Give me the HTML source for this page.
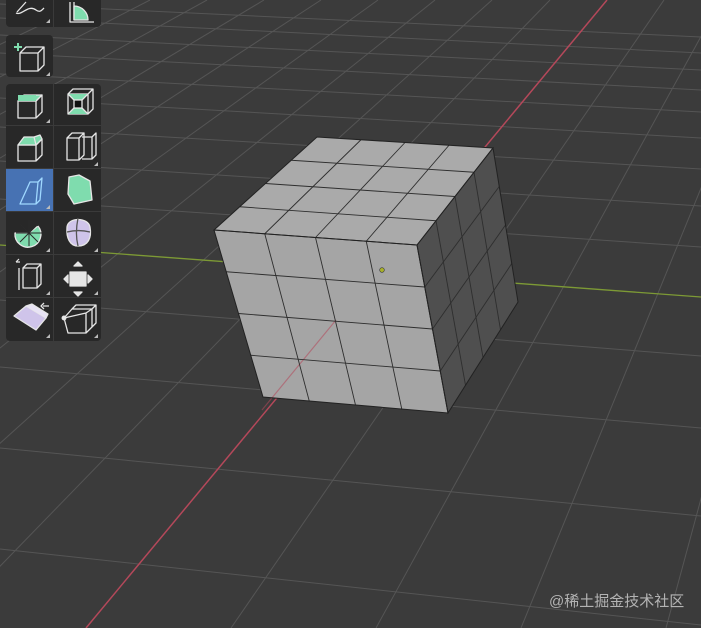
<!DOCTYPE html>
<html><head><meta charset="utf-8"><style>
html,body{margin:0;padding:0;width:701px;height:628px;overflow:hidden;background:#3b3b3b}
svg{position:absolute;left:0;top:0}
.wm{position:absolute;left:549px;top:590px;font:15px "Liberation Sans","Noto Sans CJK SC",sans-serif;color:#c9c9c9;opacity:.85}
</style></head><body>
<svg width="701" height="628" viewBox="0 0 701 628">
<g stroke="#555" stroke-width="1" fill="none">
<line x1="664" y1="0" x2="231" y2="628"/><line x1="721" y1="0" x2="376" y2="628"/>
<line x1="778" y1="0" x2="521" y2="628"/><line x1="836" y1="0" x2="666" y2="628"/>
<line x1="893" y1="0" x2="811" y2="628"/><line x1="550" y1="0" x2="-60" y2="628"/>
<line x1="492" y1="0" x2="-205" y2="628"/><line x1="435" y1="0" x2="-350" y2="628"/>
<line x1="378" y1="0" x2="-495" y2="628"/><line x1="321" y1="0" x2="-640" y2="628"/>
<line x1="264" y1="0" x2="-785" y2="628"/><line x1="207" y1="0" x2="-930" y2="628"/>
<line x1="150" y1="0" x2="-1075" y2="628"/><line x1="93" y1="0" x2="-1220" y2="628"/>
<line x1="0" y1="549" x2="701" y2="625"/><line x1="0" y1="448" x2="701" y2="516"/>
<line x1="0" y1="367" x2="701" y2="428"/><line x1="0" y1="300" x2="701" y2="356"/>
<line x1="0" y1="199" x2="701" y2="247"/><line x1="0" y1="161" x2="701" y2="206"/>
<line x1="0" y1="127" x2="701" y2="169"/><line x1="0" y1="98" x2="701" y2="138"/>
<line x1="0" y1="74" x2="701" y2="112"/><line x1="0" y1="53" x2="701" y2="90"/>
<line x1="0" y1="35" x2="701" y2="70"/><line x1="0" y1="18" x2="701" y2="53"/>
<line x1="0" y1="4" x2="701" y2="37"/>
</g>
<line x1="0" y1="245" x2="701" y2="297" stroke="#7d9a35" stroke-width="1.3"/>
<line x1="607" y1="0" x2="86" y2="628" stroke="#b4485a" stroke-width="1.5"/>
<!-- cube -->
<polygon points="214,230 417,245 493,148 317,137" fill="#aaaaaa"/>
<polygon points="214,230 417,245 448,413 263,397" fill="#a5a5a5"/>
<polygon points="417,245 493,148 518,302 448,413" fill="#4f4f4f"/>
<line x1="336" y1="320" x2="262" y2="410" stroke="#b4485a" stroke-width="1.2" opacity=".55"/>
<g stroke="#2e2e2e" stroke-width="0.9">
<line x1="264.75" y1="233.75" x2="309.25" y2="401"/><line x1="315.5" y1="237.5" x2="355.5" y2="405"/><line x1="366.25" y1="241.25" x2="401.75" y2="409"/>
<line x1="226.25" y1="271.75" x2="424.75" y2="287"/><line x1="238.5" y1="313.5" x2="432.5" y2="329"/><line x1="250.75" y1="355.25" x2="440.25" y2="371"/>
<line x1="239.75" y1="206.75" x2="436" y2="220.75"/><line x1="265.5" y1="183.5" x2="455" y2="196.5"/><line x1="291.25" y1="160.25" x2="474" y2="172.25"/>
<line x1="264.75" y1="233.75" x2="361" y2="139.75"/><line x1="315.5" y1="237.5" x2="405" y2="142.5"/><line x1="366.25" y1="241.25" x2="449" y2="145.25"/>
<line x1="436" y1="220.75" x2="465.5" y2="385.25"/><line x1="455" y1="196.5" x2="483" y2="357.5"/><line x1="474" y1="172.25" x2="500.5" y2="329.75"/>
<line x1="424.75" y1="287" x2="499.25" y2="186.5"/><line x1="432.5" y1="329" x2="505.5" y2="225"/><line x1="440.25" y1="371" x2="511.75" y2="263.5"/>
</g>
<g stroke="#222" stroke-width="1" fill="none">
<polygon points="214,230 417,245 493,148 317,137"/><polygon points="214,230 417,245 448,413 263,397"/><polygon points="417,245 493,148 518,302 448,413"/>
</g>
<circle cx="382" cy="270" r="2.3" fill="#a8b02a" stroke="#333" stroke-width=".6"/>
<!-- toolbar -->
<g fill="#282828">
<rect x="6" y="-8" width="95" height="35" rx="4"/>
<rect x="6" y="35" width="47" height="42" rx="4"/>
<rect x="6" y="84" width="95" height="257" rx="4"/>
</g>
<rect x="6" y="168" width="47" height="43" fill="#4772b3"/>
<g stroke="#3a3a3a" stroke-width="1"><line x1="53.5" y1="-8" x2="53.5" y2="27"/><line x1="53.5" y1="84" x2="53.5" y2="341"/>
<line x1="6" y1="125.5" x2="101" y2="125.5"/><line x1="6" y1="168.5" x2="101" y2="168.5"/><line x1="6" y1="211.5" x2="101" y2="211.5"/><line x1="6" y1="254.5" x2="101" y2="254.5"/><line x1="6" y1="297.5" x2="101" y2="297.5"/></g>
<g fill="#bbb">
<polygon points="50,19 50,23 46,23"/><polygon points="50,72 50,76 46,76"/>
<polygon points="50,119 50,123 46,123"/><polygon points="98,162 98,166 94,166"/><polygon points="50,205 50,209 46,209"/>
<polygon points="50,248 50,252 46,252"/><polygon points="98,248 98,252 94,252"/><polygon points="50,291 50,295 46,295"/><polygon points="98,291 98,295 94,295"/>
<polygon points="50,334 50,338 46,338"/><polygon points="98,334 98,338 94,338"/>
</g>
<g stroke="#e6e6e6" stroke-width="1.3" fill="none" stroke-linejoin="round">
<path d="M17,12 L26,2 M16,13 C22,16 28,4 36,10 C40,13 42,10 44,8"/>
<path d="M70,2 V22 H94 M74,2 V20" /><path d="M74,20 L74,6 A14,14 0 0 1 88,20 Z" fill="#7fdcae"/>
<path d="M14,47 H22 M18,43 V51" stroke="#7fdcae" stroke-width="2"/>
<path d="M20,53 H38 V71 H20 Z M20,53 L26,47 H44 V65 L38,71 M38,53 L44,47"/>
<path d="M18,101 H36 V118 H18 Z M36,101 L42,95 V112 L36,118" /><path d="M18,101 L24,95 H42 L36,101 Z M18,95 v0" fill="#7fdcae"/><rect x="18" y="95" width="18" height="6" fill="#7fdcae" stroke="none"/>
<path d="M68,94 H88 V114 H68 Z M68,94 L73,89 H93 V109 L88,114 M88,94 L93,89" /><path d="M68,94 L74,100 H82 L88,94 M68,114 L74,108 H82 L88,114" fill="#7fdcae"/><rect x="74" y="100" width="8" height="8" fill="#111"/>
<path d="M18,145 H36 V161 H18 Z M36,145 L42,139 V155 L36,161"/><path d="M18,145 L24,137 H34 L36,145 Z M34,137 L40,135 L42,139 L36,145" fill="#7fdcae"/>
<path d="M67,138 H79 V160 H67 Z M79,138 L84,133 V155 L79,160 M67,138 L72,133 H84 M82,137 H92 V159 H82 M92,137 L96,133 V155 L92,159"/>
<path d="M20,204 L30,182 H38 L36,204 Z M38,182 L42,178 L40,200 L36,204" stroke="#9fd8ff"/>
<path d="M69,177 L79,175 L90,181 L92,200 L74,204 L68,194 Z" fill="#7fdcae"/>
<path d="M15,233 A13,13 0 1 0 38,226 L29,233 Z" fill="#7fdcae"/><path d="M29,221 A12,12 0 0 1 38,226 M16,233 H42 M29,220 V246 M20,224 L38,242 M20,242 L38,224" stroke="#2a2a2a" stroke-width="1"/>
<path d="M67,227 C68,217 88,217 90,227 C92,238 88,246 78,246 C70,246 66,238 67,227 Z" fill="#cfc4ea"/><path d="M67,232 C75,230 82,230 90,232 M78,218 C76,228 76,238 78,246" stroke="#555"/>
<path d="M19,268 V290 M23,268 L27,264 H41 V284 L37,288 H23 Z M37,268 H23 M37,268 V288 M37,268 L41,264"/><path d="M20,262 L16,262 M16,262 L19,259" stroke-width="1.2"/>
<path d="M70,272 H86 V286 H70 Z M78,262 L74,266 H82 Z M78,296 L74,292 H82 Z M64,279 L68,275 V283 Z M92,279 L88,275 V283 Z M72,274 L84,284 M84,274 L72,284" fill="#e6e6e6"/>
<path d="M14,316 L26,306 L46,318 L36,330 Z" fill="#cfc4ea"/><path d="M26,306 L32,304 L48,314 L46,318" fill="#e8e3f5"/><path d="M43,306 H49 M44,303 L41,306 L44,309"/>
<path d="M64,318 L72,309 H92 V327 L86,333 H68 Z M72,309 L76,305 H96 V323 L92,327 M92,309 L96,305 M64,318 L86,313 L86,333 M86,313 L92,309"/><circle cx="64" cy="318" r="1.8" fill="#e6e6e6"/>
</g>
</svg>
<div class="wm">@稀土掘金技术社区</div>
</body></html>
